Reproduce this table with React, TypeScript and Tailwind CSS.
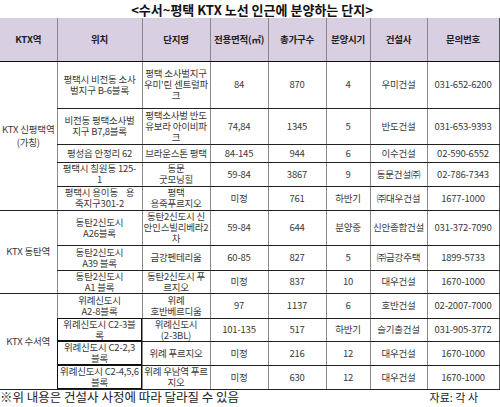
import React from "react";

type Row = {
  loc: React.ReactNode;
  name: React.ReactNode;
  area: string;
  units: string;
  when: string;
  builder: string;
  phone: string;
  h: number;
  thick?: boolean;
};

const groups: { station: React.ReactNode; rows: Row[] }[] = [
  {
    station: (
      <>
        KTX 신평택역
        <br />
        (가칭)
      </>
    ),
    rows: [
      { loc: <>평택시 비전동 소사<br />벌지구 B-6블록</>, name: <>평택 소사벌지구<br />우미'린 센트럴파<br />크</>, area: "84", units: "870", when: "4", builder: "우미건설", phone: "031-652-6200", h: 47 },
      { loc: <>비전동 평택소사벌<br />지구 B7,8블록</>, name: <>평택소사벌 반도<br />유보라 아이비파<br />크</>, area: "74,84", units: "1345", when: "5", builder: "반도건설", phone: "031-653-9393", h: 36 },
      { loc: <>평성읍 안정리 62</>, name: <>브라운스톤 평택</>, area: "84-145", units: "944", when: "6", builder: "이수건설", phone: "02-590-6552", h: 18 },
      { loc: <>평택시 칠원동 125-<br />1</>, name: <>동문<br />굿모닝힐</>, area: "59-84", units: "3867", when: "9", builder: "동문건설㈜", phone: "02-786-7343", h: 24 },
      { loc: <>평택시 용이동&nbsp;&nbsp;&nbsp;&nbsp;용<br />죽지구301-2</>, name: <>평택<br />용죽푸르지오</>, area: "미정", units: "761", when: "하반기", builder: "㈜대우건설", phone: "1677-1000", h: 24 },
    ],
  },
  {
    station: <>KTX 동탄역</>,
    rows: [
      { loc: <>동탄2신도시<br />A26블록</>, name: <>동탄2신도시 신<br />안인스빌리베라2<br />차</>, area: "59-84", units: "644", when: "분양중", builder: "신안종합건설", phone: "031-372-7090", h: 35 },
      { loc: <>동탄2신도시<br />A39 블록</>, name: <>금강펜테리움</>, area: "60-85", units: "827", when: "5", builder: "㈜금강주택", phone: "1899-5733", h: 25 },
      { loc: <>동탄2신도시<br />A1 블록</>, name: <>동탄2신도시 푸<br />르지오</>, area: "미정", units: "837", when: "10", builder: "대우건설", phone: "1670-1000", h: 22 },
    ],
  },
  {
    station: <>KTX 수서역</>,
    rows: [
      { loc: <>위례신도시<br />A2-8블록</>, name: <>위례<br />호반베르디움</>, area: "97", units: "1137", when: "6", builder: "호반건설", phone: "02-2007-7000", h: 25 },
      { loc: <>위례신도시 C2-3블<br />록</>, name: <>위례신도시<br />(2-3BL)</>, area: "101-135", units: "517", when: "하반기", builder: "슬기출건설", phone: "031-905-3772", h: 23, thick: true },
      { loc: <>위례신도시 C2-2,3<br />블록</>, name: <>위례 푸르지오</>, area: "미정", units: "216", when: "12", builder: "대우건설", phone: "1670-1000", h: 24, thick: true },
      { loc: <>위례신도시 C2-4,5,6<br />블록</>, name: <>위례 우남역 푸르<br />지오</>, area: "미정", units: "630", when: "12", builder: "대우건설", phone: "1670-1000", h: 24, thick: true },
    ],
  },
];

const td =
  "border-b border-l border-b-[#222] border-l-[#8a8a8a] text-center align-middle p-0 leading-[11px] whitespace-nowrap";

export default function App() {
  return (
    <div
      className="w-[500px] h-[407px] bg-white text-[#3a3a3a] overflow-hidden"
      style={{ fontFamily: '"Noto Sans CJK KR", "Noto Sans", sans-serif' }}
    >
      <div className="h-[18px] flex items-center justify-center pl-[4px] text-[13px] font-bold text-[#111] leading-none">
        &lt;수서~평택 KTX 노선 인근에 분양하는 단지&gt;
      </div>
      <table className="w-[499px] table-fixed border-collapse border-r border-r-[#555] text-[9.5px] tracking-[-0.2px]">
        <colgroup>
          <col className="w-[57px]" />
          <col className="w-[85px]" />
          <col className="w-[68px]" />
          <col className="w-[58px]" />
          <col className="w-[58px]" />
          <col className="w-[44px]" />
          <col className="w-[57px]" />
          <col className="w-[72px]" />
        </colgroup>
        <thead>
          <tr className="h-[43px] bg-[#d8cfe3] text-[#222]">
            {["KTX역", "위치", "단지명", "전용면적(㎡)", "총가구수", "분양시기", "건설사", "문의번호"].map((t, i) => (
              <th
                key={t}
                className={`border-b border-b-[#111] text-center align-middle p-0 font-bold leading-[12px] whitespace-nowrap ${i === 0 ? "" : "border-l border-l-[#888]"}`}
              >
                {t}
              </th>
            ))}
          </tr>
        </thead>
        <tbody>
          {groups.map((g) =>
            g.rows.map((r, i) => (
              <tr key={r.phone + r.units} style={{ height: r.h }}>
                {i === 0 && (
                  <td
                    rowSpan={g.rows.length}
                    className="border-b border-b-[#222] text-center align-middle p-0 leading-[13px] whitespace-nowrap"
                  >
                    {g.station}
                  </td>
                )}
                <td className={`${td} ${r.thick ? "outline outline-[1.5px] -outline-offset-1 outline-[#111]" : ""}`}>{r.loc}</td>
                <td className={td}>{r.name}</td>
                <td className={td}>{r.area}</td>
                <td className={td}>{r.units}</td>
                <td className={td}>{r.when}</td>
                <td className={td}>{r.builder}</td>
                <td className={td}>{r.phone}</td>
              </tr>
            ))
          )}
        </tbody>
      </table>
      <div className="flex justify-between items-center h-[16px] text-[12.5px] text-[#222] leading-none">
        <span>※위 내용은 건설사 사정에 따라 달라질 수 있음</span>
        <span className="text-[11px] mr-[22px]">자료: 각 사</span>
      </div>
    </div>
  );
}
